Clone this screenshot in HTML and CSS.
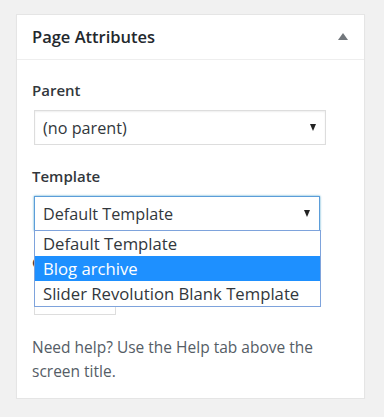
FILE: index.html
```html
<!DOCTYPE html>
<html lang="en-US">
    <head>
        <title>Page Attributes</title>
        <meta name="viewport" content="width=device-width, initial-scale=1.0">
        <link rel="stylesheet" href="styles.css">
    </head>
    <body>

        <div class="postbox">
            <div class="postbox-header">
                <h2>Page Attributes</h2>
                <span class="toggle-arrow"></span>
            </div>

            <div class="inside">
                <p class="attr-label">Parent</p>
                <div class="select select-parent">
                    <span>(no parent)</span>
                    <span class="caret"></span>
                </div>

                <p class="attr-label">Template</p>
                <div class="select select-template is-open">
                    <span>Default Template</span>
                    <span class="caret"></span>
                    <ul class="dropdown">
                        <li>Default Template</li>
                        <li class="is-hover">Blog archive</li>
                        <li>Slider Revolution Blank Template</li>
                    </ul>
                </div>

                <p class="attr-label">Order</p>
                <div class="order-input"></div>

                <p class="help">Need help? Use the Help tab above the screen title.</p>
            </div>
        </div>

    </body>
</html>
```

FILE: styles.css
```css
* {
    box-sizing: border-box;
    margin: 0;
    padding: 0;
}

html {
    background: #f1f1f1;
    color: #444;
    font-family: "Open Sans", "Noto Sans", sans-serif;
}

body {
    padding: 14px 0 0 16px;
}

.postbox {
    width: 349px;
    background: #fff;
    border: 1px solid #e5e5e5;
    box-shadow: 0 1px 1px rgba(0, 0, 0, 0.04);
}

.postbox-header {
    display: flex;
    align-items: center;
    justify-content: space-between;
    height: 45px;
    padding: 0 16px 0 15px;
    border-bottom: 1px solid #eee;
}

.postbox-header h2 {
    font-size: 16.5px;
    font-weight: 600;
    line-height: 44px;
    color: #23282d;
}

.toggle-arrow {
    width: 0;
    height: 0;
    border-left: 5px solid transparent;
    border-right: 5px solid transparent;
    border-bottom: 7px solid #72777c;
    margin-top: -1px;
}

.inside {
    padding: 20px 15px 15px;
}

.attr-label {
    font-size: 15px;
    font-weight: 600;
    line-height: 20px;
    color: #32373c;
    margin-bottom: 10px;
}

.select {
    position: relative;
    display: flex;
    align-items: center;
    justify-content: space-between;
    height: 35px;
    margin: 0 0 21px 2px;
    padding: 0 9px 0 8px;
    border: 1px solid #ddd;
    box-shadow: inset 0 1px 2px rgba(0, 0, 0, 0.07);
    font-size: 16.2px;
    color: #32373c;
}

.select-parent {
    width: 292px;
}

.select-template {
    width: 286px;
}

.select.is-open {
    border-color: #5b9dd9;
    box-shadow: 0 0 2px rgba(30, 140, 190, 0.8);
}

.caret {
    width: 0;
    height: 0;
    border-left: 3.5px solid transparent;
    border-right: 3.5px solid transparent;
    border-top: 7px solid #222;
}

.dropdown {
    position: absolute;
    top: 100%;
    left: -1px;
    width: 287px;
    list-style: none;
    background: #fff;
    border: 1px solid #7ea3dc;
    z-index: 2;
}

.dropdown li {
    height: 25px;
    line-height: 25px;
    padding-left: 8px;
    font-size: 16.7px;
    color: #32373c;
}

.dropdown li.is-hover {
    background: #1e90ff;
    color: #fff;
}

.order-input {
    width: 82px;
    height: 33px;
    margin-left: 2px;
    border: 1px solid #ddd;
}

.help {
    margin-top: 20px;
    font-size: 15.5px;
    line-height: 24px;
    color: #555d66;
}
```
